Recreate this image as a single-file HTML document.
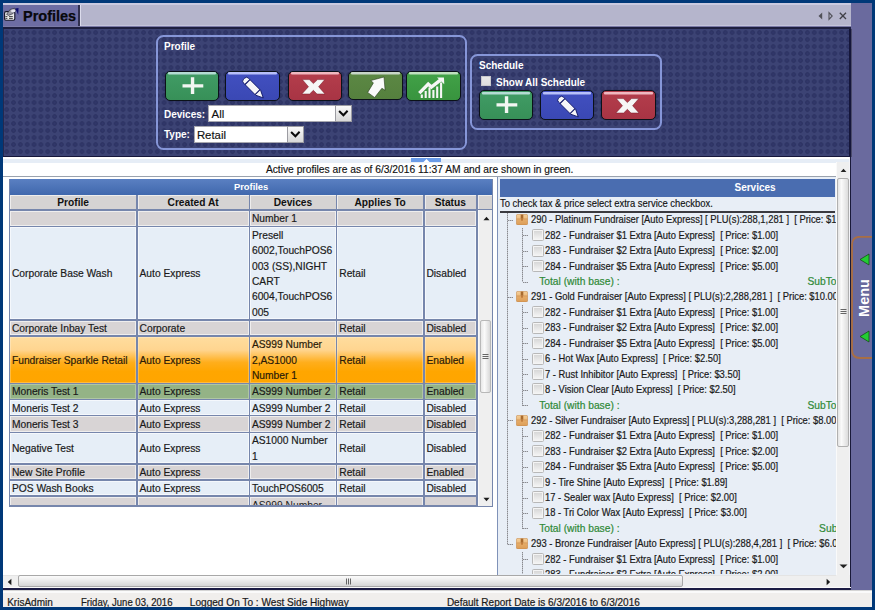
<!DOCTYPE html>
<html><head><meta charset="utf-8"><style>
html,body{margin:0;padding:0;}
body{width:875px;height:610px;position:relative;overflow:hidden;background:#003878;font-family:"Liberation Sans", sans-serif;}
</style></head><body>
<div style="position:absolute;left:3px;top:3px;width:848px;height:24px;background:#b5b5cc;"></div>
<div style="position:absolute;left:3px;top:3px;width:848px;height:1.7999999999999998px;background:#cacae0;"></div>
<div style="position:absolute;left:80px;top:24.6px;width:771px;height:1.0999999999999979px;background:#c4c4da;"></div>
<div style="position:absolute;left:3px;top:4.8px;width:75px;height:20.9px;background:#6d6da3;"></div>
<div style="position:absolute;left:78px;top:4.8px;width:1.7999999999999972px;height:20.9px;background:#30304e;"></div>
<div style="position:absolute;left:79.8px;top:4.8px;width:1.2000000000000028px;height:20.9px;background:#dcdcec;"></div>
<div style="position:absolute;left:3px;top:25.7px;width:848px;height:1.3000000000000007px;background:#7a7aa6;"></div>
<div style="position:absolute;left:3px;top:27px;width:848px;height:2.1999999999999993px;background:#1e1f40;"></div>
<svg style="position:absolute;left:2px;top:5px" width="20" height="20" viewBox="0 0 20 20">
<rect x="2.6" y="6.6" width="10.2" height="8.6" rx="1.4" fill="#ececec" stroke="#141428" stroke-width="1.1"/>
<path d="M3.4 11.6h2M7 11.6h3.8M3.4 13.4h2M7 13.4h3.8" stroke="#2a2a2a" stroke-width="0.9"/>
<path d="M4.6 9.4 L8.2 4.4 L12.8 3.2 L14 5.6 L11 8.6 L6.6 10.4Z" fill="#9a9aa4" stroke="#303040" stroke-width="0.7"/>
<ellipse cx="11.2" cy="5.9" rx="2.2" ry="1.3" fill="#e6e6f0"/>
<path d="M13.2 3.4 L16.5 3.0 L16.2 9.7Z" fill="#0c0c70"/>
</svg>
<div style="position:absolute;left:22.9px;top:9.40px;height:14px;line-height:14px;font-size:15px;color:#08080c;font-weight:700;white-space:nowrap;letter-spacing:0px;"><span style="display:inline-block;transform:scaleX(0.965);transform-origin:0 0;-webkit-text-stroke:0.25px #08080c">Profiles</span></div>
<svg style="position:absolute;left:815px;top:10px" width="34" height="12" viewBox="0 0 34 12">
<path d="M3.5 6 L7.2 2.5 L7.2 9.5Z" fill="#505058"/>
<path d="M14 2.6 L17.2 6 L14 9.4Z" fill="none" stroke="#505058" stroke-width="1.1"/>
<path d="M24.8 2.8 L31 9 M31 2.8 L24.8 9" stroke="#404048" stroke-width="1.3"/>
</svg>
<div style="position:absolute;left:851px;top:3px;width:21px;height:588px;background:#6a6a9e;"></div>
<div style="position:absolute;left:849px;top:29px;width:1.5px;height:128px;background:#15163a;"></div>
<div style="position:absolute;left:850.5px;top:29px;width:1.5px;height:128px;background:#4a4a6a;"></div>
<div style="position:absolute;left:3px;top:29px;width:846px;height:127px;background-color:#3c4374;background-image:radial-gradient(circle at 3.42px 3.5px, #32386a 0px, #30366a 0.8px, #2e3464 1.4px, #2e3464 2.0px, #3c4374 2.7px);background-size:6.845px 7px;background-position:0.27px 0.06px;"></div>
<div style="position:absolute;left:3px;top:155.5px;width:848px;height:1.5px;background:#15163a;"></div>
<div style="position:absolute;left:3px;top:29px;width:1px;height:127px;background:#26284e;"></div>
<div style="position:absolute;left:156.3px;top:35.3px;width:310.4px;height:114.50000000000001px;box-sizing:border-box;border:2px solid #8696d8;border-radius:7.5px;"></div>
<div style="position:absolute;left:470.3px;top:54px;width:191.7px;height:76px;box-sizing:border-box;border:2px solid #8696d8;border-radius:7.5px;"></div>
<div style="position:absolute;left:164px;top:40.33px;height:14px;line-height:14px;font-size:10px;color:#fff;font-weight:700;white-space:nowrap;letter-spacing:0px;">Profile</div>
<div style="position:absolute;left:164px;top:108.13px;height:14px;line-height:14px;font-size:10px;color:#fff;font-weight:700;white-space:nowrap;letter-spacing:0px;">Devices:</div>
<div style="position:absolute;left:164px;top:128.03px;height:14px;line-height:14px;font-size:10px;color:#fff;font-weight:700;white-space:nowrap;letter-spacing:0px;">Type:</div>
<div style="position:absolute;left:479px;top:59.03px;height:14px;line-height:14px;font-size:10px;color:#fff;font-weight:700;white-space:nowrap;letter-spacing:0px;">Schedule</div>
<div style="position:absolute;left:496px;top:76.43px;height:14px;line-height:14px;font-size:10px;color:#fff;font-weight:700;white-space:nowrap;letter-spacing:0px;">Show All Schedule</div>
<div style="position:absolute;left:481px;top:75.9px;width:10.399999999999977px;height:10.099999999999994px;box-sizing:border-box;background:linear-gradient(#e8e8e8,#dedede);border:1px solid #c8c8cc;"></div>
<div style="position:absolute;left:164.5px;top:70.6px;width:54.90px;height:30.00px;box-sizing:border-box;border:1.8px solid #0b1119;border-radius:5px;background:linear-gradient(#419c66,#379058);overflow:hidden;box-shadow:0 0 1px rgba(0,0,0,0.5)"><div style="position:absolute;left:2px;right:2px;top:0.7px;height:1.8px;border-radius:1px;background:#b4dcd4;box-shadow:0 0.5px 0.6px #b4dcd4"></div><svg style="position:absolute;left:-1.8px;top:-1.8px" width="54.90" height="30.00" viewBox="0 0 54.90 30.00"><path d="M18.5 15.85h20.8M28.55 7.3v16.7" stroke="#f2f6f2" stroke-width="3.4"/></svg></div>
<div style="position:absolute;left:225px;top:70.6px;width:55.20px;height:30.00px;box-sizing:border-box;border:1.8px solid #0b1119;border-radius:5px;background:linear-gradient(#4250c0,#3a48b4);overflow:hidden;box-shadow:0 0 1px rgba(0,0,0,0.5)"><div style="position:absolute;left:2px;right:2px;top:0.7px;height:1.8px;border-radius:1px;background:#b8c0fa;box-shadow:0 0.5px 0.6px #b8c0fa"></div><svg style="position:absolute;left:-1.8px;top:-1.8px" width="55.20" height="30.00" viewBox="0 0 55.20 30.00"><g transform="translate(20.7,9.3) rotate(-45)"><path d="M-3.5 1.8 Q-3.5 -0.8 -0.9 -0.8 L0.9 -0.8 Q3.5 -0.8 3.5 1.8 L3.5 19 L0 26.3 L-3.5 19Z" fill="#f6f6f8" stroke="#10186a" stroke-width="0.9"/><path d="M-3.5 3.9h7M-3.5 18.2h7" stroke="#10186a" stroke-width="1.2"/></g></svg></div>
<div style="position:absolute;left:287.6px;top:70.6px;width:54.60px;height:30.00px;box-sizing:border-box;border:1.8px solid #0b1119;border-radius:5px;background:linear-gradient(#b43e4c,#a83444);overflow:hidden;box-shadow:0 0 1px rgba(0,0,0,0.5)"><div style="position:absolute;left:2px;right:2px;top:0.7px;height:1.8px;border-radius:1px;background:#f0b8c0;box-shadow:0 0.5px 0.6px #f0b8c0"></div><svg style="position:absolute;left:-1.8px;top:-1.8px" width="54.60" height="30.00" viewBox="0 0 54.60 30.00"><path d="M15.3 9.6 L22.3 9.6 L26.4 13.6 L30.6 9.6 L37.8 9.6 L31.6 16.7 L38 24 L30 24 L26.4 20.3 L22.6 24 L14.9 24 L21.5 16.7Z" fill="#f6f6f6" stroke="#7a1a28" stroke-width="0.5"/></svg></div>
<div style="position:absolute;left:348.3px;top:70.6px;width:54.50px;height:29.00px;box-sizing:border-box;border:1.8px solid #0b1119;border-radius:5px;background:linear-gradient(#5c8844,#55803e);overflow:hidden;box-shadow:0 0 1px rgba(0,0,0,0.5)"><div style="position:absolute;left:2px;right:2px;top:0.7px;height:1.8px;border-radius:1px;background:#c8d6c8;box-shadow:0 0.5px 0.6px #c8d6c8"></div><svg style="position:absolute;left:-1.8px;top:-1.8px" width="54.50" height="29.00" viewBox="0 0 54.50 29.00"><path transform="translate(0.7,0.8)" d="M35.3 6.2 L22.2 9.7 L24.7 12.2 L19 21.6 L25.9 26.7 L33.2 17.5 L36.4 19.5Z" fill="#fafafa" stroke="#2a4020" stroke-width="0.6"/></svg></div>
<div style="position:absolute;left:405.6px;top:70.6px;width:55.00px;height:30.00px;box-sizing:border-box;border:1.8px solid #0b1119;border-radius:5px;background:linear-gradient(#42a248,#38943e);overflow:hidden;box-shadow:0 0 1px rgba(0,0,0,0.5)"><div style="position:absolute;left:2px;right:2px;top:0.7px;height:1.8px;border-radius:1px;background:#c0e0c0;box-shadow:0 0.5px 0.6px #c0e0c0"></div><svg style="position:absolute;left:-1.8px;top:-1.8px" width="55.00" height="30.00" viewBox="0 0 55.00 30.00"><g transform="translate(0.7,1.6)"><path d="M16.1 26.3V23M20 26.3V19.5M23.8 26.3V16M27.7 26.3V18.5M31.5 26.3V15M35.4 26.3V11" stroke="#f6f6f6" stroke-width="2.1"/><path d="M13.6 21.5 L22.5 12.5 L25.7 15.5 L34.9 8.3" stroke="#f6f6f6" stroke-width="3.4" fill="none"/><path d="M38.2 5.8 L31.3 5.8 L38.6 12.7Z" fill="#f6f6f6"/></g></svg></div>
<div style="position:absolute;left:478.6px;top:90.2px;width:54.80px;height:29.40px;box-sizing:border-box;border:1.8px solid #0b1119;border-radius:5px;background:linear-gradient(#419c66,#379058);overflow:hidden;box-shadow:0 0 1px rgba(0,0,0,0.5)"><div style="position:absolute;left:2px;right:2px;top:0.7px;height:1.8px;border-radius:1px;background:#b4dcd4;box-shadow:0 0.5px 0.6px #b4dcd4"></div><svg style="position:absolute;left:-1.8px;top:-1.8px" width="54.80" height="29.40" viewBox="0 0 54.80 29.40"><path d="M18.5 15.85h20.8M28.55 7.3v16.7" stroke="#f2f6f2" stroke-width="3.4"/></svg></div>
<div style="position:absolute;left:539.5px;top:90.2px;width:54.80px;height:29.40px;box-sizing:border-box;border:1.8px solid #0b1119;border-radius:5px;background:linear-gradient(#4250c0,#3a48b4);overflow:hidden;box-shadow:0 0 1px rgba(0,0,0,0.5)"><div style="position:absolute;left:2px;right:2px;top:0.7px;height:1.8px;border-radius:1px;background:#b8c0fa;box-shadow:0 0.5px 0.6px #b8c0fa"></div><svg style="position:absolute;left:-1.8px;top:-1.8px" width="54.80" height="29.40" viewBox="0 0 54.80 29.40"><g transform="translate(20.7,9.3) rotate(-45)"><path d="M-3.5 1.8 Q-3.5 -0.8 -0.9 -0.8 L0.9 -0.8 Q3.5 -0.8 3.5 1.8 L3.5 19 L0 26.3 L-3.5 19Z" fill="#f6f6f8" stroke="#10186a" stroke-width="0.9"/><path d="M-3.5 3.9h7M-3.5 18.2h7" stroke="#10186a" stroke-width="1.2"/></g></svg></div>
<div style="position:absolute;left:601.4px;top:90.2px;width:54.60px;height:29.40px;box-sizing:border-box;border:1.8px solid #0b1119;border-radius:5px;background:linear-gradient(#b43e4c,#a83444);overflow:hidden;box-shadow:0 0 1px rgba(0,0,0,0.5)"><div style="position:absolute;left:2px;right:2px;top:0.7px;height:1.8px;border-radius:1px;background:#f0b8c0;box-shadow:0 0.5px 0.6px #f0b8c0"></div><svg style="position:absolute;left:-1.8px;top:-1.8px" width="54.60" height="29.40" viewBox="0 0 54.60 29.40"><path d="M15.3 9.6 L22.3 9.6 L26.4 13.6 L30.6 9.6 L37.8 9.6 L31.6 16.7 L38 24 L30 24 L26.4 20.3 L22.6 24 L14.9 24 L21.5 16.7Z" fill="#f6f6f6" stroke="#7a1a28" stroke-width="0.5"/></svg></div>
<div style="position:absolute;left:208.4px;top:105.2px;width:143.40px;height:16.40px;box-sizing:border-box;background:#fff;border:1px solid #a8a8b0;"></div>
<div style="position:absolute;left:335.00px;top:105.2px;width:16.8px;height:16.40px;box-sizing:border-box;background:linear-gradient(#fafafa,#e4e4e4 60%,#d8d8d8);border:1.2px solid #9c9ca2;"><svg style="position:absolute;left:-1.2px;top:-1.2px" width="17" height="17" viewBox="0 0 17 17"><path d="M4.1 6 L8.4 10.3 L12.6 5.8" stroke="#0a0a0a" stroke-width="2" fill="none"/></svg></div>
<div style="position:absolute;left:211.6px;top:107.35px;height:14px;line-height:14px;font-size:11.4px;color:#111;font-weight:400;white-space:nowrap;letter-spacing:0px;-webkit-text-stroke:0.15px #111">All</div>
<div style="position:absolute;left:193.7px;top:125.8px;width:110.10px;height:16.80px;box-sizing:border-box;background:#fff;border:1px solid #a8a8b0;"></div>
<div style="position:absolute;left:287.00px;top:125.8px;width:16.8px;height:16.80px;box-sizing:border-box;background:linear-gradient(#fafafa,#e4e4e4 60%,#d8d8d8);border:1.2px solid #9c9ca2;"><svg style="position:absolute;left:-1.2px;top:-1.2px" width="17" height="17" viewBox="0 0 17 17"><path d="M4.1 6 L8.4 10.3 L12.6 5.8" stroke="#0a0a0a" stroke-width="2" fill="none"/></svg></div>
<div style="position:absolute;left:196.89999999999998px;top:128.35px;height:14px;line-height:14px;font-size:11.4px;color:#111;font-weight:400;white-space:nowrap;letter-spacing:0px;-webkit-text-stroke:0.15px #111">Retail</div>
<div style="position:absolute;left:3px;top:157px;width:848px;height:417.5px;background:#fff;"></div>
<div style="position:absolute;left:3px;top:158.5px;width:848px;height:4.0px;background:#e6edf6;"></div>
<div style="position:absolute;left:3px;top:176px;width:833px;height:1.1999999999999886px;background:#9aa2ae;"></div>
<div style="position:absolute;left:497px;top:177.2px;width:339px;height:2.0px;background:#dfe8f2;"></div>
<div style="position:absolute;left:411.4px;top:158px;width:29.600000000000023px;height:4.199999999999989px;background:#6a9be8;"></div>
<svg style="position:absolute;left:422px;top:158px" width="9" height="5" viewBox="0 0 9 5"><path d="M1 4.5 L4.5 1 L8 4.5Z" fill="#fff"/></svg>
<div style="position:absolute;left:265.9px;top:163.35px;height:14px;line-height:14px;font-size:10.25px;color:#111;font-weight:400;white-space:nowrap;letter-spacing:0px;-webkit-text-stroke:0.15px #111">Active profiles are as of 6/3/2016 11:37 AM and are shown in green.</div>
<div style="position:absolute;left:8.700000000000001px;top:179.2px;width:484.50000000000006px;height:327.6px;background:#7686ac;"></div>
<div style="position:absolute;left:9.9px;top:179.2px;width:482.1px;height:16.0px;background:linear-gradient(#5a80c2,#4068ad);"></div>
<div style="position:absolute;left:51.099999999999994px;width:400px;text-align:center;top:179.94px;height:14px;line-height:14px;font-size:9.4px;color:#fff;font-weight:700;white-space:nowrap;letter-spacing:0px">Profiles</div>
<div style="position:absolute;left:9.9px;top:195.2px;width:482.1px;height:13.850000000000023px;background:#d5d3d3;"></div>
<div style="position:absolute;left:9.9px;top:210.55px;width:466.25px;height:15.199999999999989px;background:#d8d4d5;"></div>
<div style="position:absolute;left:10.05px;top:210.55px;width:126.10px;height:15.20px;box-sizing:border-box;box-shadow:inset 0 0 0 1px rgba(255,255,255,0.6);padding-left:1.9px;display:flex;align-items:center;font-size:10.25px;line-height:15.26px;color:#1a1a1a;white-space:nowrap;padding-top:1.3px;-webkit-text-stroke:0.18px #1a1a1a"></div>
<div style="position:absolute;left:137.65px;top:210.55px;width:110.90px;height:15.20px;box-sizing:border-box;box-shadow:inset 0 0 0 1px rgba(255,255,255,0.6);padding-left:1.9px;display:flex;align-items:center;font-size:10.25px;line-height:15.26px;color:#1a1a1a;white-space:nowrap;padding-top:1.3px;-webkit-text-stroke:0.18px #1a1a1a"></div>
<div style="position:absolute;left:250.05px;top:210.55px;width:85.80px;height:15.20px;box-sizing:border-box;box-shadow:inset 0 0 0 1px rgba(255,255,255,0.6);padding-left:1.9px;display:flex;align-items:center;font-size:10.25px;line-height:15.26px;color:#1a1a1a;white-space:nowrap;padding-top:1.3px;-webkit-text-stroke:0.18px #1a1a1a"><div>Number 1</div></div>
<div style="position:absolute;left:337.35px;top:210.55px;width:85.70px;height:15.20px;box-sizing:border-box;box-shadow:inset 0 0 0 1px rgba(255,255,255,0.6);padding-left:1.9px;display:flex;align-items:center;font-size:10.25px;line-height:15.26px;color:#1a1a1a;white-space:nowrap;padding-top:1.3px;-webkit-text-stroke:0.18px #1a1a1a"></div>
<div style="position:absolute;left:424.55px;top:210.55px;width:51.60px;height:15.20px;box-sizing:border-box;box-shadow:inset 0 0 0 1px rgba(255,255,255,0.6);padding-left:1.9px;display:flex;align-items:center;font-size:10.25px;line-height:15.26px;color:#1a1a1a;white-space:nowrap;padding-top:1.3px;-webkit-text-stroke:0.18px #1a1a1a"></div>
<div style="position:absolute;left:9.9px;top:227.25px;width:466.25px;height:92.19999999999999px;background:#e6eef7;"></div>
<div style="position:absolute;left:10.05px;top:227.25px;width:126.10px;height:92.20px;box-sizing:border-box;box-shadow:inset 0 0 0 1px rgba(255,255,255,0.6);padding-left:1.9px;display:flex;align-items:center;font-size:10.25px;line-height:15.26px;color:#1a1a1a;white-space:nowrap;padding-top:1.3px;-webkit-text-stroke:0.18px #1a1a1a"><div>Corporate Base Wash</div></div>
<div style="position:absolute;left:137.65px;top:227.25px;width:110.90px;height:92.20px;box-sizing:border-box;box-shadow:inset 0 0 0 1px rgba(255,255,255,0.6);padding-left:1.9px;display:flex;align-items:center;font-size:10.25px;line-height:15.26px;color:#1a1a1a;white-space:nowrap;padding-top:1.3px;-webkit-text-stroke:0.18px #1a1a1a"><div>Auto Express</div></div>
<div style="position:absolute;left:250.05px;top:227.25px;width:85.80px;height:92.20px;box-sizing:border-box;box-shadow:inset 0 0 0 1px rgba(255,255,255,0.6);padding-left:1.9px;display:flex;align-items:center;font-size:10.25px;line-height:15.26px;color:#1a1a1a;white-space:nowrap;padding-top:1.3px;-webkit-text-stroke:0.18px #1a1a1a"><div>Presell<br>6002,TouchPOS6<br>003 (SS),NIGHT<br>CART<br>6004,TouchPOS6<br>005</div></div>
<div style="position:absolute;left:337.35px;top:227.25px;width:85.70px;height:92.20px;box-sizing:border-box;box-shadow:inset 0 0 0 1px rgba(255,255,255,0.6);padding-left:1.9px;display:flex;align-items:center;font-size:10.25px;line-height:15.26px;color:#1a1a1a;white-space:nowrap;padding-top:1.3px;-webkit-text-stroke:0.18px #1a1a1a"><div>Retail</div></div>
<div style="position:absolute;left:424.55px;top:227.25px;width:51.60px;height:92.20px;box-sizing:border-box;box-shadow:inset 0 0 0 1px rgba(255,255,255,0.6);padding-left:1.9px;display:flex;align-items:center;font-size:10.25px;line-height:15.26px;color:#1a1a1a;white-space:nowrap;padding-top:1.3px;-webkit-text-stroke:0.18px #1a1a1a"><div>Disabled</div></div>
<div style="position:absolute;left:9.9px;top:320.95px;width:466.25px;height:14.5px;background:#d8d4d5;"></div>
<div style="position:absolute;left:10.05px;top:320.95px;width:126.10px;height:14.50px;box-sizing:border-box;box-shadow:inset 0 0 0 1px rgba(255,255,255,0.6);padding-left:1.9px;display:flex;align-items:center;font-size:10.25px;line-height:15.26px;color:#1a1a1a;white-space:nowrap;padding-top:1.3px;-webkit-text-stroke:0.18px #1a1a1a"><div>Corporate Inbay Test</div></div>
<div style="position:absolute;left:137.65px;top:320.95px;width:110.90px;height:14.50px;box-sizing:border-box;box-shadow:inset 0 0 0 1px rgba(255,255,255,0.6);padding-left:1.9px;display:flex;align-items:center;font-size:10.25px;line-height:15.26px;color:#1a1a1a;white-space:nowrap;padding-top:1.3px;-webkit-text-stroke:0.18px #1a1a1a"><div>Corporate</div></div>
<div style="position:absolute;left:250.05px;top:320.95px;width:85.80px;height:14.50px;box-sizing:border-box;box-shadow:inset 0 0 0 1px rgba(255,255,255,0.6);padding-left:1.9px;display:flex;align-items:center;font-size:10.25px;line-height:15.26px;color:#1a1a1a;white-space:nowrap;padding-top:1.3px;-webkit-text-stroke:0.18px #1a1a1a"></div>
<div style="position:absolute;left:337.35px;top:320.95px;width:85.70px;height:14.50px;box-sizing:border-box;box-shadow:inset 0 0 0 1px rgba(255,255,255,0.6);padding-left:1.9px;display:flex;align-items:center;font-size:10.25px;line-height:15.26px;color:#1a1a1a;white-space:nowrap;padding-top:1.3px;-webkit-text-stroke:0.18px #1a1a1a"><div>Retail</div></div>
<div style="position:absolute;left:424.55px;top:320.95px;width:51.60px;height:14.50px;box-sizing:border-box;box-shadow:inset 0 0 0 1px rgba(255,255,255,0.6);padding-left:1.9px;display:flex;align-items:center;font-size:10.25px;line-height:15.26px;color:#1a1a1a;white-space:nowrap;padding-top:1.3px;-webkit-text-stroke:0.18px #1a1a1a"><div>Disabled</div></div>
<div style="position:absolute;left:9.9px;top:336.95px;width:466.25px;height:45.60000000000002px;background:linear-gradient(#ffdd9e 0%,#ffd590 28%,#ffae1c 55%,#ffa600 75%,#ffa500 100%);"></div>
<div style="position:absolute;left:10.05px;top:336.95px;width:126.10px;height:45.60px;box-sizing:border-box;box-shadow:inset 0 0 0 1px rgba(255,255,255,0.25);padding-left:1.9px;display:flex;align-items:center;font-size:10.25px;line-height:15.26px;color:#2a1a08;white-space:nowrap;padding-top:1.3px;-webkit-text-stroke:0.18px #2a1a08"><div>Fundraiser Sparkle Retail</div></div>
<div style="position:absolute;left:137.65px;top:336.95px;width:110.90px;height:45.60px;box-sizing:border-box;box-shadow:inset 0 0 0 1px rgba(255,255,255,0.25);padding-left:1.9px;display:flex;align-items:center;font-size:10.25px;line-height:15.26px;color:#2a1a08;white-space:nowrap;padding-top:1.3px;-webkit-text-stroke:0.18px #2a1a08"><div>Auto Express</div></div>
<div style="position:absolute;left:250.05px;top:336.95px;width:85.80px;height:45.60px;box-sizing:border-box;box-shadow:inset 0 0 0 1px rgba(255,255,255,0.25);padding-left:1.9px;display:flex;align-items:center;font-size:10.25px;line-height:15.26px;color:#2a1a08;white-space:nowrap;padding-top:1.3px;-webkit-text-stroke:0.18px #2a1a08"><div>AS999 Number<br>2,AS1000<br>Number 1</div></div>
<div style="position:absolute;left:337.35px;top:336.95px;width:85.70px;height:45.60px;box-sizing:border-box;box-shadow:inset 0 0 0 1px rgba(255,255,255,0.25);padding-left:1.9px;display:flex;align-items:center;font-size:10.25px;line-height:15.26px;color:#2a1a08;white-space:nowrap;padding-top:1.3px;-webkit-text-stroke:0.18px #2a1a08"><div>Retail</div></div>
<div style="position:absolute;left:424.55px;top:336.95px;width:51.60px;height:45.60px;box-sizing:border-box;box-shadow:inset 0 0 0 1px rgba(255,255,255,0.25);padding-left:1.9px;display:flex;align-items:center;font-size:10.25px;line-height:15.26px;color:#2a1a08;white-space:nowrap;padding-top:1.3px;-webkit-text-stroke:0.18px #2a1a08"><div>Enabled</div></div>
<div style="position:absolute;left:9.9px;top:384.05px;width:466.25px;height:14.5px;background:#94b386;"></div>
<div style="position:absolute;left:10.05px;top:384.05px;width:126.10px;height:14.50px;box-sizing:border-box;box-shadow:inset 0 0 0 1px rgba(255,255,255,0.25);padding-left:1.9px;display:flex;align-items:center;font-size:10.25px;line-height:15.26px;color:#1a1a1a;white-space:nowrap;padding-top:1.3px;-webkit-text-stroke:0.18px #1a1a1a"><div>Moneris Test 1</div></div>
<div style="position:absolute;left:137.65px;top:384.05px;width:110.90px;height:14.50px;box-sizing:border-box;box-shadow:inset 0 0 0 1px rgba(255,255,255,0.25);padding-left:1.9px;display:flex;align-items:center;font-size:10.25px;line-height:15.26px;color:#1a1a1a;white-space:nowrap;padding-top:1.3px;-webkit-text-stroke:0.18px #1a1a1a"><div>Auto Express</div></div>
<div style="position:absolute;left:250.05px;top:384.05px;width:85.80px;height:14.50px;box-sizing:border-box;box-shadow:inset 0 0 0 1px rgba(255,255,255,0.25);padding-left:1.9px;display:flex;align-items:center;font-size:10.25px;line-height:15.26px;color:#1a1a1a;white-space:nowrap;padding-top:1.3px;-webkit-text-stroke:0.18px #1a1a1a"><div>AS999 Number 2</div></div>
<div style="position:absolute;left:337.35px;top:384.05px;width:85.70px;height:14.50px;box-sizing:border-box;box-shadow:inset 0 0 0 1px rgba(255,255,255,0.25);padding-left:1.9px;display:flex;align-items:center;font-size:10.25px;line-height:15.26px;color:#1a1a1a;white-space:nowrap;padding-top:1.3px;-webkit-text-stroke:0.18px #1a1a1a"><div>Retail</div></div>
<div style="position:absolute;left:424.55px;top:384.05px;width:51.60px;height:14.50px;box-sizing:border-box;box-shadow:inset 0 0 0 1px rgba(255,255,255,0.25);padding-left:1.9px;display:flex;align-items:center;font-size:10.25px;line-height:15.26px;color:#1a1a1a;white-space:nowrap;padding-top:1.3px;-webkit-text-stroke:0.18px #1a1a1a"><div>Enabled</div></div>
<div style="position:absolute;left:9.9px;top:400.05px;width:466.25px;height:14.899999999999977px;background:#e6eef7;"></div>
<div style="position:absolute;left:10.05px;top:400.05px;width:126.10px;height:14.90px;box-sizing:border-box;box-shadow:inset 0 0 0 1px rgba(255,255,255,0.6);padding-left:1.9px;display:flex;align-items:center;font-size:10.25px;line-height:15.26px;color:#1a1a1a;white-space:nowrap;padding-top:1.3px;-webkit-text-stroke:0.18px #1a1a1a"><div>Moneris Test 2</div></div>
<div style="position:absolute;left:137.65px;top:400.05px;width:110.90px;height:14.90px;box-sizing:border-box;box-shadow:inset 0 0 0 1px rgba(255,255,255,0.6);padding-left:1.9px;display:flex;align-items:center;font-size:10.25px;line-height:15.26px;color:#1a1a1a;white-space:nowrap;padding-top:1.3px;-webkit-text-stroke:0.18px #1a1a1a"><div>Auto Express</div></div>
<div style="position:absolute;left:250.05px;top:400.05px;width:85.80px;height:14.90px;box-sizing:border-box;box-shadow:inset 0 0 0 1px rgba(255,255,255,0.6);padding-left:1.9px;display:flex;align-items:center;font-size:10.25px;line-height:15.26px;color:#1a1a1a;white-space:nowrap;padding-top:1.3px;-webkit-text-stroke:0.18px #1a1a1a"><div>AS999 Number 2</div></div>
<div style="position:absolute;left:337.35px;top:400.05px;width:85.70px;height:14.90px;box-sizing:border-box;box-shadow:inset 0 0 0 1px rgba(255,255,255,0.6);padding-left:1.9px;display:flex;align-items:center;font-size:10.25px;line-height:15.26px;color:#1a1a1a;white-space:nowrap;padding-top:1.3px;-webkit-text-stroke:0.18px #1a1a1a"><div>Retail</div></div>
<div style="position:absolute;left:424.55px;top:400.05px;width:51.60px;height:14.90px;box-sizing:border-box;box-shadow:inset 0 0 0 1px rgba(255,255,255,0.6);padding-left:1.9px;display:flex;align-items:center;font-size:10.25px;line-height:15.26px;color:#1a1a1a;white-space:nowrap;padding-top:1.3px;-webkit-text-stroke:0.18px #1a1a1a"><div>Disabled</div></div>
<div style="position:absolute;left:9.9px;top:416.45px;width:466.25px;height:15.100000000000023px;background:#d8d4d5;"></div>
<div style="position:absolute;left:10.05px;top:416.45px;width:126.10px;height:15.10px;box-sizing:border-box;box-shadow:inset 0 0 0 1px rgba(255,255,255,0.6);padding-left:1.9px;display:flex;align-items:center;font-size:10.25px;line-height:15.26px;color:#1a1a1a;white-space:nowrap;padding-top:1.3px;-webkit-text-stroke:0.18px #1a1a1a"><div>Moneris Test 3</div></div>
<div style="position:absolute;left:137.65px;top:416.45px;width:110.90px;height:15.10px;box-sizing:border-box;box-shadow:inset 0 0 0 1px rgba(255,255,255,0.6);padding-left:1.9px;display:flex;align-items:center;font-size:10.25px;line-height:15.26px;color:#1a1a1a;white-space:nowrap;padding-top:1.3px;-webkit-text-stroke:0.18px #1a1a1a"><div>Auto Express</div></div>
<div style="position:absolute;left:250.05px;top:416.45px;width:85.80px;height:15.10px;box-sizing:border-box;box-shadow:inset 0 0 0 1px rgba(255,255,255,0.6);padding-left:1.9px;display:flex;align-items:center;font-size:10.25px;line-height:15.26px;color:#1a1a1a;white-space:nowrap;padding-top:1.3px;-webkit-text-stroke:0.18px #1a1a1a"><div>AS999 Number 2</div></div>
<div style="position:absolute;left:337.35px;top:416.45px;width:85.70px;height:15.10px;box-sizing:border-box;box-shadow:inset 0 0 0 1px rgba(255,255,255,0.6);padding-left:1.9px;display:flex;align-items:center;font-size:10.25px;line-height:15.26px;color:#1a1a1a;white-space:nowrap;padding-top:1.3px;-webkit-text-stroke:0.18px #1a1a1a"><div>Retail</div></div>
<div style="position:absolute;left:424.55px;top:416.45px;width:51.60px;height:15.10px;box-sizing:border-box;box-shadow:inset 0 0 0 1px rgba(255,255,255,0.6);padding-left:1.9px;display:flex;align-items:center;font-size:10.25px;line-height:15.26px;color:#1a1a1a;white-space:nowrap;padding-top:1.3px;-webkit-text-stroke:0.18px #1a1a1a"><div>Disabled</div></div>
<div style="position:absolute;left:9.9px;top:433.05px;width:466.25px;height:30.0px;background:#e6eef7;"></div>
<div style="position:absolute;left:10.05px;top:433.05px;width:126.10px;height:30.00px;box-sizing:border-box;box-shadow:inset 0 0 0 1px rgba(255,255,255,0.6);padding-left:1.9px;display:flex;align-items:center;font-size:10.25px;line-height:15.26px;color:#1a1a1a;white-space:nowrap;padding-top:1.3px;-webkit-text-stroke:0.18px #1a1a1a"><div>Negative Test</div></div>
<div style="position:absolute;left:137.65px;top:433.05px;width:110.90px;height:30.00px;box-sizing:border-box;box-shadow:inset 0 0 0 1px rgba(255,255,255,0.6);padding-left:1.9px;display:flex;align-items:center;font-size:10.25px;line-height:15.26px;color:#1a1a1a;white-space:nowrap;padding-top:1.3px;-webkit-text-stroke:0.18px #1a1a1a"><div>Auto Express</div></div>
<div style="position:absolute;left:250.05px;top:433.05px;width:85.80px;height:30.00px;box-sizing:border-box;box-shadow:inset 0 0 0 1px rgba(255,255,255,0.6);padding-left:1.9px;display:flex;align-items:center;font-size:10.25px;line-height:15.26px;color:#1a1a1a;white-space:nowrap;padding-top:1.3px;-webkit-text-stroke:0.18px #1a1a1a"><div>AS1000 Number<br>1</div></div>
<div style="position:absolute;left:337.35px;top:433.05px;width:85.70px;height:30.00px;box-sizing:border-box;box-shadow:inset 0 0 0 1px rgba(255,255,255,0.6);padding-left:1.9px;display:flex;align-items:center;font-size:10.25px;line-height:15.26px;color:#1a1a1a;white-space:nowrap;padding-top:1.3px;-webkit-text-stroke:0.18px #1a1a1a"><div>Retail</div></div>
<div style="position:absolute;left:424.55px;top:433.05px;width:51.60px;height:30.00px;box-sizing:border-box;box-shadow:inset 0 0 0 1px rgba(255,255,255,0.6);padding-left:1.9px;display:flex;align-items:center;font-size:10.25px;line-height:15.26px;color:#1a1a1a;white-space:nowrap;padding-top:1.3px;-webkit-text-stroke:0.18px #1a1a1a"><div>Disabled</div></div>
<div style="position:absolute;left:9.9px;top:464.55px;width:466.25px;height:14.699999999999989px;background:#d8d4d5;"></div>
<div style="position:absolute;left:10.05px;top:464.55px;width:126.10px;height:14.70px;box-sizing:border-box;box-shadow:inset 0 0 0 1px rgba(255,255,255,0.6);padding-left:1.9px;display:flex;align-items:center;font-size:10.25px;line-height:15.26px;color:#1a1a1a;white-space:nowrap;padding-top:1.3px;-webkit-text-stroke:0.18px #1a1a1a"><div>New Site Profile</div></div>
<div style="position:absolute;left:137.65px;top:464.55px;width:110.90px;height:14.70px;box-sizing:border-box;box-shadow:inset 0 0 0 1px rgba(255,255,255,0.6);padding-left:1.9px;display:flex;align-items:center;font-size:10.25px;line-height:15.26px;color:#1a1a1a;white-space:nowrap;padding-top:1.3px;-webkit-text-stroke:0.18px #1a1a1a"><div>Auto Express</div></div>
<div style="position:absolute;left:250.05px;top:464.55px;width:85.80px;height:14.70px;box-sizing:border-box;box-shadow:inset 0 0 0 1px rgba(255,255,255,0.6);padding-left:1.9px;display:flex;align-items:center;font-size:10.25px;line-height:15.26px;color:#1a1a1a;white-space:nowrap;padding-top:1.3px;-webkit-text-stroke:0.18px #1a1a1a"></div>
<div style="position:absolute;left:337.35px;top:464.55px;width:85.70px;height:14.70px;box-sizing:border-box;box-shadow:inset 0 0 0 1px rgba(255,255,255,0.6);padding-left:1.9px;display:flex;align-items:center;font-size:10.25px;line-height:15.26px;color:#1a1a1a;white-space:nowrap;padding-top:1.3px;-webkit-text-stroke:0.18px #1a1a1a"><div>Retail</div></div>
<div style="position:absolute;left:424.55px;top:464.55px;width:51.60px;height:14.70px;box-sizing:border-box;box-shadow:inset 0 0 0 1px rgba(255,255,255,0.6);padding-left:1.9px;display:flex;align-items:center;font-size:10.25px;line-height:15.26px;color:#1a1a1a;white-space:nowrap;padding-top:1.3px;-webkit-text-stroke:0.18px #1a1a1a"><div>Enabled</div></div>
<div style="position:absolute;left:9.9px;top:480.75px;width:466.25px;height:14.699999999999989px;background:#e6eef7;"></div>
<div style="position:absolute;left:10.05px;top:480.75px;width:126.10px;height:14.70px;box-sizing:border-box;box-shadow:inset 0 0 0 1px rgba(255,255,255,0.6);padding-left:1.9px;display:flex;align-items:center;font-size:10.25px;line-height:15.26px;color:#1a1a1a;white-space:nowrap;padding-top:1.3px;-webkit-text-stroke:0.18px #1a1a1a"><div>POS Wash Books</div></div>
<div style="position:absolute;left:137.65px;top:480.75px;width:110.90px;height:14.70px;box-sizing:border-box;box-shadow:inset 0 0 0 1px rgba(255,255,255,0.6);padding-left:1.9px;display:flex;align-items:center;font-size:10.25px;line-height:15.26px;color:#1a1a1a;white-space:nowrap;padding-top:1.3px;-webkit-text-stroke:0.18px #1a1a1a"><div>Auto Express</div></div>
<div style="position:absolute;left:250.05px;top:480.75px;width:85.80px;height:14.70px;box-sizing:border-box;box-shadow:inset 0 0 0 1px rgba(255,255,255,0.6);padding-left:1.9px;display:flex;align-items:center;font-size:10.25px;line-height:15.26px;color:#1a1a1a;white-space:nowrap;padding-top:1.3px;-webkit-text-stroke:0.18px #1a1a1a"><div>TouchPOS6005</div></div>
<div style="position:absolute;left:337.35px;top:480.75px;width:85.70px;height:14.70px;box-sizing:border-box;box-shadow:inset 0 0 0 1px rgba(255,255,255,0.6);padding-left:1.9px;display:flex;align-items:center;font-size:10.25px;line-height:15.26px;color:#1a1a1a;white-space:nowrap;padding-top:1.3px;-webkit-text-stroke:0.18px #1a1a1a"><div>Retail</div></div>
<div style="position:absolute;left:424.55px;top:480.75px;width:51.60px;height:14.70px;box-sizing:border-box;box-shadow:inset 0 0 0 1px rgba(255,255,255,0.6);padding-left:1.9px;display:flex;align-items:center;font-size:10.25px;line-height:15.26px;color:#1a1a1a;white-space:nowrap;padding-top:1.3px;-webkit-text-stroke:0.18px #1a1a1a"><div>Disabled</div></div>
<div style="position:absolute;left:9.9px;top:496.95px;width:466.25px;height:8.75px;background:#d8d4d5;"></div>
<div style="position:absolute;left:251.95px;top:496.95px;width:80px;height:8.75px;overflow:hidden;font-size:10.25px;line-height:15.26px;color:#1a1a1a;white-space:nowrap"><div style="position:absolute;top:1.4px">AS999 Number</div></div>
<div style="position:absolute;left:10.05px;top:496.95px;width:126.10px;height:9.75px;box-shadow:inset 0 0 0 1px rgba(255,255,255,0.6)"></div>
<div style="position:absolute;left:137.65px;top:496.95px;width:110.90px;height:9.75px;box-shadow:inset 0 0 0 1px rgba(255,255,255,0.6)"></div>
<div style="position:absolute;left:250.05px;top:496.95px;width:85.80px;height:9.75px;box-shadow:inset 0 0 0 1px rgba(255,255,255,0.6)"></div>
<div style="position:absolute;left:337.35px;top:496.95px;width:85.70px;height:9.75px;box-shadow:inset 0 0 0 1px rgba(255,255,255,0.6)"></div>
<div style="position:absolute;left:136.15px;top:195.2px;width:1.5px;height:311.0px;background:#7686ac;"></div>
<div style="position:absolute;left:248.55px;top:195.2px;width:1.5px;height:311.0px;background:#7686ac;"></div>
<div style="position:absolute;left:335.85px;top:195.2px;width:1.5px;height:311.0px;background:#7686ac;"></div>
<div style="position:absolute;left:423.05px;top:195.2px;width:1.5px;height:311.0px;background:#7686ac;"></div>
<div style="position:absolute;left:476.15px;top:195.2px;width:1.5px;height:311.0px;background:#7686ac;"></div>
<div style="position:absolute;left:9.3px;top:209.05px;width:467.59999999999997px;height:1.5px;background:#7686ac;"></div>
<div style="position:absolute;left:9.3px;top:225.75px;width:467.59999999999997px;height:1.5px;background:#7686ac;"></div>
<div style="position:absolute;left:9.3px;top:319.45px;width:467.59999999999997px;height:1.5px;background:#7686ac;"></div>
<div style="position:absolute;left:9.3px;top:335.45px;width:467.59999999999997px;height:1.5px;background:#7686ac;"></div>
<div style="position:absolute;left:9.3px;top:382.55px;width:467.59999999999997px;height:1.5px;background:#7686ac;"></div>
<div style="position:absolute;left:9.3px;top:398.55px;width:467.59999999999997px;height:1.5px;background:#7686ac;"></div>
<div style="position:absolute;left:9.3px;top:414.95px;width:467.59999999999997px;height:1.5px;background:#7686ac;"></div>
<div style="position:absolute;left:9.3px;top:431.55px;width:467.59999999999997px;height:1.5px;background:#7686ac;"></div>
<div style="position:absolute;left:9.3px;top:463.05px;width:467.59999999999997px;height:1.5px;background:#7686ac;"></div>
<div style="position:absolute;left:9.3px;top:479.25px;width:467.59999999999997px;height:1.5px;background:#7686ac;"></div>
<div style="position:absolute;left:9.3px;top:495.45px;width:467.59999999999997px;height:1.5px;background:#7686ac;"></div>
<div style="position:absolute;left:9.3px;top:505.45px;width:467.59999999999997px;height:1.5px;background:#7686ac;"></div>
<div style="position:absolute;left:9.3px;top:505.7px;width:483.3px;height:1.1000000000000227px;background:#7686ac;"></div>
<div style="position:absolute;left:10.05px;top:195.2px;width:126.10px;height:13.85px;box-shadow:inset 1px 1px 0 rgba(255,255,255,0.6)"></div>
<div style="position:absolute;left:-126.89999999999999px;width:400px;text-align:center;top:196.37px;height:14px;line-height:14px;font-size:10.2px;color:#111;font-weight:700;white-space:nowrap;letter-spacing:0px">Profile</div>
<div style="position:absolute;left:137.65px;top:195.2px;width:110.90px;height:13.85px;box-shadow:inset 1px 1px 0 rgba(255,255,255,0.6)"></div>
<div style="position:absolute;left:-6.899999999999977px;width:400px;text-align:center;top:196.37px;height:14px;line-height:14px;font-size:10.2px;color:#111;font-weight:700;white-space:nowrap;letter-spacing:0px">Created At</div>
<div style="position:absolute;left:250.05px;top:195.2px;width:85.80px;height:13.85px;box-shadow:inset 1px 1px 0 rgba(255,255,255,0.6)"></div>
<div style="position:absolute;left:92.95000000000005px;width:400px;text-align:center;top:196.37px;height:14px;line-height:14px;font-size:10.2px;color:#111;font-weight:700;white-space:nowrap;letter-spacing:0px">Devices</div>
<div style="position:absolute;left:337.35px;top:195.2px;width:85.70px;height:13.85px;box-shadow:inset 1px 1px 0 rgba(255,255,255,0.6)"></div>
<div style="position:absolute;left:180.20000000000005px;width:400px;text-align:center;top:196.37px;height:14px;line-height:14px;font-size:10.2px;color:#111;font-weight:700;white-space:nowrap;letter-spacing:0px">Applies To</div>
<div style="position:absolute;left:424.55px;top:195.2px;width:51.60px;height:13.85px;box-shadow:inset 1px 1px 0 rgba(255,255,255,0.6)"></div>
<div style="position:absolute;left:250.35000000000002px;width:400px;text-align:center;top:196.37px;height:14px;line-height:14px;font-size:10.2px;color:#111;font-weight:700;white-space:nowrap;letter-spacing:0px">Status</div>
<div style="position:absolute;left:477.65px;top:195.2px;width:14.20px;height:13.85px;box-shadow:inset 1px 1px 0 rgba(255,255,255,0.6)"></div>
<div style="position:absolute;left:477.5px;top:210.4px;width:14.5px;height:295.6px;background:#efefef;"></div>
<div style="position:absolute;left:477.5px;top:210.4px;width:1.0px;height:295.6px;background:#fafafa;"></div>
<svg style="position:absolute;left:482.5px;top:215.5px" width="7" height="5" viewBox="0 0 7 5"><path d="M0.5 4.3 L3.5 0.8 L6.5 4.3Z" fill="#1a1a1a"/></svg>
<svg style="position:absolute;left:482.5px;top:496.5px" width="7" height="5" viewBox="0 0 7 5"><path d="M0.5 0.7 L3.5 4.2 L6.5 0.7Z" fill="#1a1a1a"/></svg>
<div style="position:absolute;left:479.7px;top:319.7px;width:11.800000000000011px;height:73.80000000000001px;box-sizing:border-box;background:linear-gradient(90deg,#e8e8e8,#fafafa 40%,#d8d8d8);border:1px solid #b8b8b8;border-radius:2px;"></div>
<svg style="position:absolute;left:482px;top:353px" width="7" height="8" viewBox="0 0 7 8"><path d="M0.5 1.5h6M0.5 3.5h6M0.5 5.5h6" stroke="#555" stroke-width="0.9"/></svg>
<div style="position:absolute;left:497px;top:177px;width:339px;height:397.5px;background:#e8eef6;"></div>
<div style="position:absolute;left:496.5px;top:177px;width:1.3000000000000114px;height:397.5px;background:#7f92b8;"></div>
<div style="position:absolute;left:499.7px;top:179.2px;width:335.59999999999997px;height:17.80000000000001px;background:#4a6db0;"></div>
<div style="position:absolute;left:734.5px;top:180.74px;height:14px;line-height:14px;font-size:10px;color:#fff;font-weight:700;white-space:nowrap;letter-spacing:0px;">Services</div>
<div style="position:absolute;left:500.3px;top:197.35px;height:14px;line-height:14px;font-size:10.25px;color:#111;font-weight:400;white-space:nowrap;letter-spacing:0px;-webkit-text-stroke:0.15px #111"><span style="display:inline-block;transform:scaleX(0.92);transform-origin:0 0">To check tax &amp; price select extra service checkbox.</span></div>
<div style="position:absolute;left:499.7px;top:211px;width:335.8px;height:1.5999999999999943px;background:#3a3a40;"></div>
<div style="position:absolute;left:498px;top:212.6px;width:338px;height:361.9px;overflow:hidden">
<div style="position:absolute;left:8.50px;top:0.40px;width:1.00px;height:331.63px;background-image:linear-gradient(#8a8a8e 50%, #bcc0c8 50%);background-size:1px 2px;"></div>
<div style="position:absolute;left:23.50px;top:15.00px;width:1.00px;height:54.72px;background-image:linear-gradient(#8a8a8e 50%, #bcc0c8 50%);background-size:1px 2px;"></div>
<div style="position:absolute;left:23.50px;top:92.15px;width:1.00px;height:101.01px;background-image:linear-gradient(#8a8a8e 50%, #bcc0c8 50%);background-size:1px 2px;"></div>
<div style="position:absolute;left:23.50px;top:215.59px;width:1.00px;height:101.01px;background-image:linear-gradient(#8a8a8e 50%, #bcc0c8 50%);background-size:1px 2px;"></div>
<div style="position:absolute;left:23.50px;top:339.03px;width:1.00px;height:39.29px;background-image:linear-gradient(#8a8a8e 50%, #bcc0c8 50%);background-size:1px 2px;"></div>
<div style="position:absolute;left:9.50px;top:7.20px;width:5.50px;height:1.00px;background-image:linear-gradient(90deg,#8a8a8e 50%, #bcc0c8 50%);background-size:2px 1px;"></div>
<svg style="position:absolute;left:17.80px;top:1.50px" width="12" height="11.2" viewBox="0 0 12 11.2"><defs><linearGradient id="pk0" x1="0" y1="0" x2="0" y2="1"><stop offset="0" stop-color="#f4d09c"/><stop offset="0.42" stop-color="#eebc7c"/><stop offset="0.48" stop-color="#e6ac68"/><stop offset="1" stop-color="#dc9e58"/></linearGradient></defs><rect x="0.3" y="0.3" width="11.4" height="10.6" rx="1.6" fill="url(#pk0)" stroke="#c4884c" stroke-width="0.6"/><rect x="4.7" y="0.6" width="2.6" height="4.3" fill="#a86a2e"/><path d="M0.6 4.9h10.8" stroke="#c88c50" stroke-width="0.6"/><rect x="5" y="4.9" width="2" height="1.8" fill="#c27c3c"/></svg>
<div style="position:absolute;left:33.30px;top:0.65px;height:14px;line-height:14px;font-size:10.25px;color:#1a1a1a;white-space:nowrap;transform:scaleX(0.915);transform-origin:0 0;-webkit-text-stroke:0.2px #1a1a1a">290 - Platinum Fundraiser [Auto Express] [ PLU(s):288,1,281 ]&nbsp; [ Price: $1.00 ]</div>
<div style="position:absolute;left:24.50px;top:22.63px;width:5.50px;height:1.00px;background-image:linear-gradient(90deg,#8a8a8e 50%, #bcc0c8 50%);background-size:2px 1px;"></div>
<div style="position:absolute;left:34.30px;top:16.53px;width:11.30px;height:12.00px;box-sizing:border-box;border:1px solid #b8b8b8;background:linear-gradient(#d4d4d4,#f6f6f6);border-radius:1.5px;box-shadow:inset 0 0 0 1px #f4f4f4;"></div>
<div style="position:absolute;left:47.40px;top:16.08px;height:14px;line-height:14px;font-size:10.25px;color:#1a1a1a;white-space:nowrap;transform:scaleX(0.915);transform-origin:0 0;-webkit-text-stroke:0.2px #1a1a1a">282 - Fundraiser $1 Extra [Auto Express]&nbsp; [ Price: $1.00]</div>
<div style="position:absolute;left:24.50px;top:38.06px;width:5.50px;height:1.00px;background-image:linear-gradient(90deg,#8a8a8e 50%, #bcc0c8 50%);background-size:2px 1px;"></div>
<div style="position:absolute;left:34.30px;top:31.96px;width:11.30px;height:12.00px;box-sizing:border-box;border:1px solid #b8b8b8;background:linear-gradient(#d4d4d4,#f6f6f6);border-radius:1.5px;box-shadow:inset 0 0 0 1px #f4f4f4;"></div>
<div style="position:absolute;left:47.40px;top:31.51px;height:14px;line-height:14px;font-size:10.25px;color:#1a1a1a;white-space:nowrap;transform:scaleX(0.915);transform-origin:0 0;-webkit-text-stroke:0.2px #1a1a1a">283 - Fundraiser $2 Extra [Auto Express]&nbsp; [ Price: $2.00]</div>
<div style="position:absolute;left:24.50px;top:53.49px;width:5.50px;height:1.00px;background-image:linear-gradient(90deg,#8a8a8e 50%, #bcc0c8 50%);background-size:2px 1px;"></div>
<div style="position:absolute;left:34.30px;top:47.39px;width:11.30px;height:12.00px;box-sizing:border-box;border:1px solid #b8b8b8;background:linear-gradient(#d4d4d4,#f6f6f6);border-radius:1.5px;box-shadow:inset 0 0 0 1px #f4f4f4;"></div>
<div style="position:absolute;left:47.40px;top:46.94px;height:14px;line-height:14px;font-size:10.25px;color:#1a1a1a;white-space:nowrap;transform:scaleX(0.915);transform-origin:0 0;-webkit-text-stroke:0.2px #1a1a1a">284 - Fundraiser $5 Extra [Auto Express]&nbsp; [ Price: $5.00]</div>
<div style="position:absolute;left:24.50px;top:68.92px;width:5.50px;height:1.00px;background-image:linear-gradient(90deg,#8a8a8e 50%, #bcc0c8 50%);background-size:2px 1px;"></div>
<div style="position:absolute;left:41.20px;top:62.87px;height:14px;line-height:14px;font-size:10.25px;color:#2f8a36;white-space:nowrap;transform:scaleX(1.0);transform-origin:0 0;-webkit-text-stroke:0.2px #2f8a36">Total (with base) :</div>
<div style="position:absolute;left:309.40px;top:62.87px;height:14px;line-height:14px;font-size:10.25px;color:#2f8a36;white-space:nowrap;transform:scaleX(1.0);transform-origin:0 0;-webkit-text-stroke:0.2px #2f8a36">SubTotal</div>
<div style="position:absolute;left:9.50px;top:84.35px;width:5.50px;height:1.00px;background-image:linear-gradient(90deg,#8a8a8e 50%, #bcc0c8 50%);background-size:2px 1px;"></div>
<svg style="position:absolute;left:17.80px;top:78.65px" width="12" height="11.2" viewBox="0 0 12 11.2"><defs><linearGradient id="pk5" x1="0" y1="0" x2="0" y2="1"><stop offset="0" stop-color="#f4d09c"/><stop offset="0.42" stop-color="#eebc7c"/><stop offset="0.48" stop-color="#e6ac68"/><stop offset="1" stop-color="#dc9e58"/></linearGradient></defs><rect x="0.3" y="0.3" width="11.4" height="10.6" rx="1.6" fill="url(#pk5)" stroke="#c4884c" stroke-width="0.6"/><rect x="4.7" y="0.6" width="2.6" height="4.3" fill="#a86a2e"/><path d="M0.6 4.9h10.8" stroke="#c88c50" stroke-width="0.6"/><rect x="5" y="4.9" width="2" height="1.8" fill="#c27c3c"/></svg>
<div style="position:absolute;left:33.30px;top:77.80px;height:14px;line-height:14px;font-size:10.25px;color:#1a1a1a;white-space:nowrap;transform:scaleX(0.915);transform-origin:0 0;-webkit-text-stroke:0.2px #1a1a1a">291 - Gold Fundraiser [Auto Express] [ PLU(s):2,288,281 ]&nbsp; [ Price: $10.00 ]</div>
<div style="position:absolute;left:24.50px;top:99.78px;width:5.50px;height:1.00px;background-image:linear-gradient(90deg,#8a8a8e 50%, #bcc0c8 50%);background-size:2px 1px;"></div>
<div style="position:absolute;left:34.30px;top:93.68px;width:11.30px;height:12.00px;box-sizing:border-box;border:1px solid #b8b8b8;background:linear-gradient(#d4d4d4,#f6f6f6);border-radius:1.5px;box-shadow:inset 0 0 0 1px #f4f4f4;"></div>
<div style="position:absolute;left:47.40px;top:93.23px;height:14px;line-height:14px;font-size:10.25px;color:#1a1a1a;white-space:nowrap;transform:scaleX(0.915);transform-origin:0 0;-webkit-text-stroke:0.2px #1a1a1a">282 - Fundraiser $1 Extra [Auto Express]&nbsp; [ Price: $1.00]</div>
<div style="position:absolute;left:24.50px;top:115.21px;width:5.50px;height:1.00px;background-image:linear-gradient(90deg,#8a8a8e 50%, #bcc0c8 50%);background-size:2px 1px;"></div>
<div style="position:absolute;left:34.30px;top:109.11px;width:11.30px;height:12.00px;box-sizing:border-box;border:1px solid #b8b8b8;background:linear-gradient(#d4d4d4,#f6f6f6);border-radius:1.5px;box-shadow:inset 0 0 0 1px #f4f4f4;"></div>
<div style="position:absolute;left:47.40px;top:108.66px;height:14px;line-height:14px;font-size:10.25px;color:#1a1a1a;white-space:nowrap;transform:scaleX(0.915);transform-origin:0 0;-webkit-text-stroke:0.2px #1a1a1a">283 - Fundraiser $2 Extra [Auto Express]&nbsp; [ Price: $2.00]</div>
<div style="position:absolute;left:24.50px;top:130.64px;width:5.50px;height:1.00px;background-image:linear-gradient(90deg,#8a8a8e 50%, #bcc0c8 50%);background-size:2px 1px;"></div>
<div style="position:absolute;left:34.30px;top:124.54px;width:11.30px;height:12.00px;box-sizing:border-box;border:1px solid #b8b8b8;background:linear-gradient(#d4d4d4,#f6f6f6);border-radius:1.5px;box-shadow:inset 0 0 0 1px #f4f4f4;"></div>
<div style="position:absolute;left:47.40px;top:124.09px;height:14px;line-height:14px;font-size:10.25px;color:#1a1a1a;white-space:nowrap;transform:scaleX(0.915);transform-origin:0 0;-webkit-text-stroke:0.2px #1a1a1a">284 - Fundraiser $5 Extra [Auto Express]&nbsp; [ Price: $5.00]</div>
<div style="position:absolute;left:24.50px;top:146.07px;width:5.50px;height:1.00px;background-image:linear-gradient(90deg,#8a8a8e 50%, #bcc0c8 50%);background-size:2px 1px;"></div>
<div style="position:absolute;left:34.30px;top:139.97px;width:11.30px;height:12.00px;box-sizing:border-box;border:1px solid #b8b8b8;background:linear-gradient(#d4d4d4,#f6f6f6);border-radius:1.5px;box-shadow:inset 0 0 0 1px #f4f4f4;"></div>
<div style="position:absolute;left:47.40px;top:139.52px;height:14px;line-height:14px;font-size:10.25px;color:#1a1a1a;white-space:nowrap;transform:scaleX(0.915);transform-origin:0 0;-webkit-text-stroke:0.2px #1a1a1a">6 - Hot Wax [Auto Express]&nbsp; [ Price: $2.50]</div>
<div style="position:absolute;left:24.50px;top:161.50px;width:5.50px;height:1.00px;background-image:linear-gradient(90deg,#8a8a8e 50%, #bcc0c8 50%);background-size:2px 1px;"></div>
<div style="position:absolute;left:34.30px;top:155.40px;width:11.30px;height:12.00px;box-sizing:border-box;border:1px solid #b8b8b8;background:linear-gradient(#d4d4d4,#f6f6f6);border-radius:1.5px;box-shadow:inset 0 0 0 1px #f4f4f4;"></div>
<div style="position:absolute;left:47.40px;top:154.95px;height:14px;line-height:14px;font-size:10.25px;color:#1a1a1a;white-space:nowrap;transform:scaleX(0.915);transform-origin:0 0;-webkit-text-stroke:0.2px #1a1a1a">7 - Rust Inhibitor [Auto Express]&nbsp; [ Price: $3.50]</div>
<div style="position:absolute;left:24.50px;top:176.93px;width:5.50px;height:1.00px;background-image:linear-gradient(90deg,#8a8a8e 50%, #bcc0c8 50%);background-size:2px 1px;"></div>
<div style="position:absolute;left:34.30px;top:170.83px;width:11.30px;height:12.00px;box-sizing:border-box;border:1px solid #b8b8b8;background:linear-gradient(#d4d4d4,#f6f6f6);border-radius:1.5px;box-shadow:inset 0 0 0 1px #f4f4f4;"></div>
<div style="position:absolute;left:47.40px;top:170.38px;height:14px;line-height:14px;font-size:10.25px;color:#1a1a1a;white-space:nowrap;transform:scaleX(0.915);transform-origin:0 0;-webkit-text-stroke:0.2px #1a1a1a">8 - Vision Clear [Auto Express]&nbsp; [ Price: $2.50]</div>
<div style="position:absolute;left:24.50px;top:192.36px;width:5.50px;height:1.00px;background-image:linear-gradient(90deg,#8a8a8e 50%, #bcc0c8 50%);background-size:2px 1px;"></div>
<div style="position:absolute;left:41.20px;top:186.31px;height:14px;line-height:14px;font-size:10.25px;color:#2f8a36;white-space:nowrap;transform:scaleX(1.0);transform-origin:0 0;-webkit-text-stroke:0.2px #2f8a36">Total (with base) :</div>
<div style="position:absolute;left:309.40px;top:186.31px;height:14px;line-height:14px;font-size:10.25px;color:#2f8a36;white-space:nowrap;transform:scaleX(1.0);transform-origin:0 0;-webkit-text-stroke:0.2px #2f8a36">SubTotal</div>
<div style="position:absolute;left:9.50px;top:207.79px;width:5.50px;height:1.00px;background-image:linear-gradient(90deg,#8a8a8e 50%, #bcc0c8 50%);background-size:2px 1px;"></div>
<svg style="position:absolute;left:17.80px;top:202.09px" width="12" height="11.2" viewBox="0 0 12 11.2"><defs><linearGradient id="pk13" x1="0" y1="0" x2="0" y2="1"><stop offset="0" stop-color="#f4d09c"/><stop offset="0.42" stop-color="#eebc7c"/><stop offset="0.48" stop-color="#e6ac68"/><stop offset="1" stop-color="#dc9e58"/></linearGradient></defs><rect x="0.3" y="0.3" width="11.4" height="10.6" rx="1.6" fill="url(#pk13)" stroke="#c4884c" stroke-width="0.6"/><rect x="4.7" y="0.6" width="2.6" height="4.3" fill="#a86a2e"/><path d="M0.6 4.9h10.8" stroke="#c88c50" stroke-width="0.6"/><rect x="5" y="4.9" width="2" height="1.8" fill="#c27c3c"/></svg>
<div style="position:absolute;left:33.30px;top:201.24px;height:14px;line-height:14px;font-size:10.25px;color:#1a1a1a;white-space:nowrap;transform:scaleX(0.915);transform-origin:0 0;-webkit-text-stroke:0.2px #1a1a1a">292 - Silver Fundraiser [Auto Express] [ PLU(s):3,288,281 ]&nbsp; [ Price: $8.00 ]</div>
<div style="position:absolute;left:24.50px;top:223.22px;width:5.50px;height:1.00px;background-image:linear-gradient(90deg,#8a8a8e 50%, #bcc0c8 50%);background-size:2px 1px;"></div>
<div style="position:absolute;left:34.30px;top:217.12px;width:11.30px;height:12.00px;box-sizing:border-box;border:1px solid #b8b8b8;background:linear-gradient(#d4d4d4,#f6f6f6);border-radius:1.5px;box-shadow:inset 0 0 0 1px #f4f4f4;"></div>
<div style="position:absolute;left:47.40px;top:216.67px;height:14px;line-height:14px;font-size:10.25px;color:#1a1a1a;white-space:nowrap;transform:scaleX(0.915);transform-origin:0 0;-webkit-text-stroke:0.2px #1a1a1a">282 - Fundraiser $1 Extra [Auto Express]&nbsp; [ Price: $1.00]</div>
<div style="position:absolute;left:24.50px;top:238.65px;width:5.50px;height:1.00px;background-image:linear-gradient(90deg,#8a8a8e 50%, #bcc0c8 50%);background-size:2px 1px;"></div>
<div style="position:absolute;left:34.30px;top:232.55px;width:11.30px;height:12.00px;box-sizing:border-box;border:1px solid #b8b8b8;background:linear-gradient(#d4d4d4,#f6f6f6);border-radius:1.5px;box-shadow:inset 0 0 0 1px #f4f4f4;"></div>
<div style="position:absolute;left:47.40px;top:232.10px;height:14px;line-height:14px;font-size:10.25px;color:#1a1a1a;white-space:nowrap;transform:scaleX(0.915);transform-origin:0 0;-webkit-text-stroke:0.2px #1a1a1a">283 - Fundraiser $2 Extra [Auto Express]&nbsp; [ Price: $2.00]</div>
<div style="position:absolute;left:24.50px;top:254.08px;width:5.50px;height:1.00px;background-image:linear-gradient(90deg,#8a8a8e 50%, #bcc0c8 50%);background-size:2px 1px;"></div>
<div style="position:absolute;left:34.30px;top:247.98px;width:11.30px;height:12.00px;box-sizing:border-box;border:1px solid #b8b8b8;background:linear-gradient(#d4d4d4,#f6f6f6);border-radius:1.5px;box-shadow:inset 0 0 0 1px #f4f4f4;"></div>
<div style="position:absolute;left:47.40px;top:247.53px;height:14px;line-height:14px;font-size:10.25px;color:#1a1a1a;white-space:nowrap;transform:scaleX(0.915);transform-origin:0 0;-webkit-text-stroke:0.2px #1a1a1a">284 - Fundraiser $5 Extra [Auto Express]&nbsp; [ Price: $5.00]</div>
<div style="position:absolute;left:24.50px;top:269.51px;width:5.50px;height:1.00px;background-image:linear-gradient(90deg,#8a8a8e 50%, #bcc0c8 50%);background-size:2px 1px;"></div>
<div style="position:absolute;left:34.30px;top:263.41px;width:11.30px;height:12.00px;box-sizing:border-box;border:1px solid #b8b8b8;background:linear-gradient(#d4d4d4,#f6f6f6);border-radius:1.5px;box-shadow:inset 0 0 0 1px #f4f4f4;"></div>
<div style="position:absolute;left:47.40px;top:262.96px;height:14px;line-height:14px;font-size:10.25px;color:#1a1a1a;white-space:nowrap;transform:scaleX(0.915);transform-origin:0 0;-webkit-text-stroke:0.2px #1a1a1a">9 - Tire Shine [Auto Express]&nbsp; [ Price: $1.89]</div>
<div style="position:absolute;left:24.50px;top:284.94px;width:5.50px;height:1.00px;background-image:linear-gradient(90deg,#8a8a8e 50%, #bcc0c8 50%);background-size:2px 1px;"></div>
<div style="position:absolute;left:34.30px;top:278.84px;width:11.30px;height:12.00px;box-sizing:border-box;border:1px solid #b8b8b8;background:linear-gradient(#d4d4d4,#f6f6f6);border-radius:1.5px;box-shadow:inset 0 0 0 1px #f4f4f4;"></div>
<div style="position:absolute;left:47.40px;top:278.39px;height:14px;line-height:14px;font-size:10.25px;color:#1a1a1a;white-space:nowrap;transform:scaleX(0.915);transform-origin:0 0;-webkit-text-stroke:0.2px #1a1a1a">17 - Sealer wax [Auto Express]&nbsp; [ Price: $2.00]</div>
<div style="position:absolute;left:24.50px;top:300.37px;width:5.50px;height:1.00px;background-image:linear-gradient(90deg,#8a8a8e 50%, #bcc0c8 50%);background-size:2px 1px;"></div>
<div style="position:absolute;left:34.30px;top:294.27px;width:11.30px;height:12.00px;box-sizing:border-box;border:1px solid #b8b8b8;background:linear-gradient(#d4d4d4,#f6f6f6);border-radius:1.5px;box-shadow:inset 0 0 0 1px #f4f4f4;"></div>
<div style="position:absolute;left:47.40px;top:293.82px;height:14px;line-height:14px;font-size:10.25px;color:#1a1a1a;white-space:nowrap;transform:scaleX(0.915);transform-origin:0 0;-webkit-text-stroke:0.2px #1a1a1a">18 - Tri Color Wax [Auto Express]&nbsp; [ Price: $3.00]</div>
<div style="position:absolute;left:24.50px;top:315.80px;width:5.50px;height:1.00px;background-image:linear-gradient(90deg,#8a8a8e 50%, #bcc0c8 50%);background-size:2px 1px;"></div>
<div style="position:absolute;left:41.20px;top:309.75px;height:14px;line-height:14px;font-size:10.25px;color:#2f8a36;white-space:nowrap;transform:scaleX(1.0);transform-origin:0 0;-webkit-text-stroke:0.2px #2f8a36">Total (with base) :</div>
<div style="position:absolute;left:321.10px;top:309.75px;height:14px;line-height:14px;font-size:10.25px;color:#2f8a36;white-space:nowrap;transform:scaleX(1.0);transform-origin:0 0;-webkit-text-stroke:0.2px #2f8a36">SubTotal</div>
<div style="position:absolute;left:9.50px;top:331.23px;width:5.50px;height:1.00px;background-image:linear-gradient(90deg,#8a8a8e 50%, #bcc0c8 50%);background-size:2px 1px;"></div>
<svg style="position:absolute;left:17.80px;top:325.53px" width="12" height="11.2" viewBox="0 0 12 11.2"><defs><linearGradient id="pk21" x1="0" y1="0" x2="0" y2="1"><stop offset="0" stop-color="#f4d09c"/><stop offset="0.42" stop-color="#eebc7c"/><stop offset="0.48" stop-color="#e6ac68"/><stop offset="1" stop-color="#dc9e58"/></linearGradient></defs><rect x="0.3" y="0.3" width="11.4" height="10.6" rx="1.6" fill="url(#pk21)" stroke="#c4884c" stroke-width="0.6"/><rect x="4.7" y="0.6" width="2.6" height="4.3" fill="#a86a2e"/><path d="M0.6 4.9h10.8" stroke="#c88c50" stroke-width="0.6"/><rect x="5" y="4.9" width="2" height="1.8" fill="#c27c3c"/></svg>
<div style="position:absolute;left:33.30px;top:324.68px;height:14px;line-height:14px;font-size:10.25px;color:#1a1a1a;white-space:nowrap;transform:scaleX(0.915);transform-origin:0 0;-webkit-text-stroke:0.2px #1a1a1a">293 - Bronze Fundraiser [Auto Express] [ PLU(s):288,4,281 ]&nbsp; [ Price: $6.00 ]</div>
<div style="position:absolute;left:24.50px;top:346.66px;width:5.50px;height:1.00px;background-image:linear-gradient(90deg,#8a8a8e 50%, #bcc0c8 50%);background-size:2px 1px;"></div>
<div style="position:absolute;left:34.30px;top:340.56px;width:11.30px;height:12.00px;box-sizing:border-box;border:1px solid #b8b8b8;background:linear-gradient(#d4d4d4,#f6f6f6);border-radius:1.5px;box-shadow:inset 0 0 0 1px #f4f4f4;"></div>
<div style="position:absolute;left:47.40px;top:340.11px;height:14px;line-height:14px;font-size:10.25px;color:#1a1a1a;white-space:nowrap;transform:scaleX(0.915);transform-origin:0 0;-webkit-text-stroke:0.2px #1a1a1a">282 - Fundraiser $1 Extra [Auto Express]&nbsp; [ Price: $1.00]</div>
<div style="position:absolute;left:24.50px;top:362.09px;width:5.50px;height:1.00px;background-image:linear-gradient(90deg,#8a8a8e 50%, #bcc0c8 50%);background-size:2px 1px;"></div>
<div style="position:absolute;left:34.30px;top:355.99px;width:11.30px;height:12.00px;box-sizing:border-box;border:1px solid #b8b8b8;background:linear-gradient(#d4d4d4,#f6f6f6);border-radius:1.5px;box-shadow:inset 0 0 0 1px #f4f4f4;"></div>
<div style="position:absolute;left:47.40px;top:355.54px;height:14px;line-height:14px;font-size:10.25px;color:#1a1a1a;white-space:nowrap;transform:scaleX(0.915);transform-origin:0 0;-webkit-text-stroke:0.2px #1a1a1a">283 - Fundraiser $2 Extra [Auto Express]&nbsp; [ Price: $2.00]</div>
</div>
<div style="position:absolute;left:836px;top:162.4px;width:13.5px;height:412.6px;background:#efefef;"></div>
<div style="position:absolute;left:836px;top:162.4px;width:1px;height:412.6px;background:#fafafa;"></div>
<div style="position:absolute;left:848.6px;top:157px;width:1.1999999999999318px;height:432px;background:#f4f4f8;"></div>
<div style="position:absolute;left:849.8px;top:157px;width:1.400000000000091px;height:432px;background:#1a1a3a;"></div>
<svg style="position:absolute;left:840px;top:168px" width="7" height="5" viewBox="0 0 7 5"><path d="M0.6 4 L3.5 0.8 L6.4 4Z" fill="#222"/></svg>
<svg style="position:absolute;left:839px;top:564px" width="9" height="5" viewBox="0 0 9 5"><path d="M0.5 0.5 L4.5 4.2 L8.5 0.5Z" fill="#222"/></svg>
<div style="position:absolute;left:837px;top:178px;width:12.299999999999955px;height:268.5px;box-sizing:border-box;background:linear-gradient(90deg,#e4e4e4,#fafafa 35%,#dcdcdc);border:1px solid #b0b0b0;border-radius:2px;"></div>
<svg style="position:absolute;left:840px;top:308px" width="7" height="8" viewBox="0 0 7 8"><path d="M0.5 1.5h6M0.5 3.5h6M0.5 5.5h6" stroke="#555" stroke-width="0.9"/></svg>
<div style="position:absolute;left:3px;top:574.5px;width:846.5px;height:13.899999999999977px;background:#efefef;"></div>
<div style="position:absolute;left:3px;top:574.5px;width:833px;height:0.7999999999999545px;background:#e4e4e4;"></div>
<div style="position:absolute;left:18px;top:575.4px;width:664.6px;height:12.100000000000023px;box-sizing:border-box;background:linear-gradient(#fbfbfb,#ececec 45%,#d6d6d6);border:1px solid #a8a8a8;border-radius:2px;"></div>
<svg style="position:absolute;left:7px;top:578px" width="5" height="8" viewBox="0 0 5 8"><path d="M4.4 0.8 L0.8 4 L4.4 7.2Z" fill="#1a1a1a"/></svg>
<svg style="position:absolute;left:826px;top:578px" width="5" height="8" viewBox="0 0 5 8"><path d="M0.6 0.8 L4.2 4 L0.6 7.2Z" fill="#1a1a1a"/></svg>
<svg style="position:absolute;left:345px;top:578px" width="8" height="7" viewBox="0 0 8 7"><path d="M1.5 0.5v6M3.5 0.5v6M5.5 0.5v6" stroke="#555" stroke-width="0.9"/></svg>
<div style="position:absolute;left:3px;top:586.8px;width:848px;height:1.6000000000000227px;background:#fafafa;"></div>
<div style="position:absolute;left:3px;top:588.4px;width:848px;height:1.8000000000000682px;background:#1c1c44;"></div>
<svg style="position:absolute;left:851px;top:236px" width="21" height="123" viewBox="0 0 21 123">
<path d="M21 0.8 H9 Q1 0.8 1 9 V114 Q1 122 9 122 H21" fill="none" stroke="#a86e44" stroke-width="1.9"/>
<path d="M9 23.5 L18 18 L18 29Z" fill="#22cc33" stroke="#114411" stroke-width="0.7"/>
<path d="M9 100.5 L18 95 L18 106Z" fill="#22cc33" stroke="#114411" stroke-width="0.7"/>
</svg>
<div style="position:absolute;left:834px;top:288.25px;width:60px;height:20px;transform:rotate(-90deg);text-align:center;line-height:20px;font-size:14.5px;color:#fff;font-weight:700">Menu</div>
<div style="position:absolute;left:3px;top:590.2px;width:869px;height:16.399999999999977px;background:#f0eeec;"></div>
<div style="position:absolute;left:3px;top:590.2px;width:869px;height:1.0px;background:#d4d4d4;"></div>
<div style="position:absolute;left:3px;top:591.2px;width:869px;height:1.3999999999999773px;background:#fafafa;"></div>
<div style="position:absolute;left:7.2px;top:596.03px;height:14px;line-height:14px;font-size:10px;color:#1a1a1a;font-weight:400;white-space:nowrap;letter-spacing:0px;-webkit-text-stroke:0.2px #1a1a1a">KrisAdmin</div>
<div style="position:absolute;left:81.3px;top:596.00px;height:14px;line-height:14px;font-size:10.1px;color:#1a1a1a;font-weight:400;white-space:nowrap;letter-spacing:0px;-webkit-text-stroke:0.2px #1a1a1a"><span style="display:inline-block;transform:scaleX(0.944);transform-origin:0 0">Friday, June 03, 2016</span></div>
<div style="position:absolute;left:189.8px;top:596.00px;height:14px;line-height:14px;font-size:10.1px;color:#1a1a1a;font-weight:400;white-space:nowrap;letter-spacing:0px;-webkit-text-stroke:0.2px #1a1a1a">Logged On To : West Side Highway</div>
<div style="position:absolute;left:446.9px;top:596.03px;height:14px;line-height:14px;font-size:10px;color:#1a1a1a;font-weight:400;white-space:nowrap;letter-spacing:0px;-webkit-text-stroke:0.2px #1a1a1a">Default Report Date is 6/3/2016 to 6/3/2016</div>
<div style="position:absolute;left:0px;top:606.6px;width:875px;height:3.3999999999999773px;background:#003878;"></div>
</body></html>
